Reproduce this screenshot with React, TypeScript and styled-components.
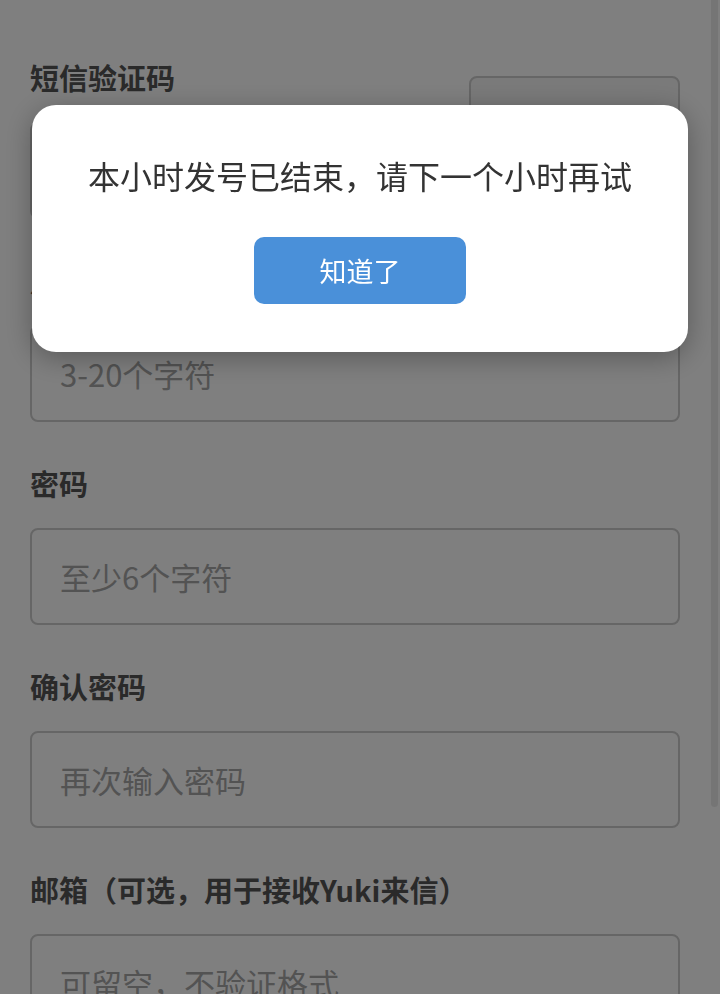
import styled, { createGlobalStyle } from "styled-components"

const GlobalStyle = createGlobalStyle`
html, body {
  margin: 0;
  padding: 0;
  overflow: hidden;
}
body {
  font-family: "Noto Sans CJK SC", "Noto Sans", sans-serif;
  background: #ffffff;
}
`

type FieldProps = {
  label: string
  placeholder: string
  type?: string
}

function Field({ label, placeholder, type = "text" }: FieldProps) {
  return (
    <FieldGroup>
      <Label>{label}</Label>
      <Input type={type} placeholder={placeholder} />
    </FieldGroup>
  )
}

export default function App() {
  return (
    <>
      <GlobalStyle />
      <Page>
        <Form>
          {/* sms code row: input + send button */}
          <SmsRow>
            <SmsColumn>
              <Label>短信验证码</Label>
              <Input placeholder="6位验证码" />
            </SmsColumn>
            <SendButton type="button">获取验证码</SendButton>
          </SmsRow>

          <Field label="用户名" placeholder="3-20个字符" />
          <Field label="密码" placeholder="至少6个字符" type="password" />
          <Field label="确认密码" placeholder="再次输入密码" type="password" />
          <Field label="邮箱（可选，用于接收Yuki来信）" placeholder="可留空，不验证格式" />

          <SubmitButton type="button">注册</SubmitButton>
        </Form>
        <ScrollThumb />
      </Page>

      <Overlay>
        <Dialog>
          <Message>本小时发号已结束，请下一个小时再试</Message>
          <OkButton type="button">知道了</OkButton>
        </Dialog>
      </Overlay>
    </>
  )
}

const Page = styled.div`
position: relative;
height: 100vh;
overflow: hidden;
background: #ffffff;
`

const ScrollThumb = styled.div`
position: absolute;
top: -6px;
right: 2px;
width: 7px;
height: 813px;
border-radius: 4px;
background: #ebebeb;
`

const Form = styled.div`
padding: 57px 40px 58px 30px;
display: flex;
flex-direction: column;
`

const FieldGroup = styled.div`
display: flex;
flex-direction: column;
margin-bottom: 41px;
`

const Label = styled.label`
font-size: 29px;
font-weight: 700;
line-height: 40px;
color: #555555;
margin-bottom: 25px;
`

const Input = styled.input`
box-sizing: border-box;
height: 97px;
width: 100%;
border: 2px solid #cccccc;
border-radius: 8px;
padding: 0 28px;
font-family: inherit;
font-size: 31px;
color: #333333;
background: #ffffff;
outline: none;

&::placeholder {
  color: #a6a6a6;
}
`

const SmsRow = styled.div`
display: flex;
align-items: flex-end;
gap: 18px;
margin-bottom: 41px;
`

const SmsColumn = styled.div`
flex: 1;
display: flex;
flex-direction: column;
`

const SendButton = styled.button`
box-sizing: border-box;
width: 211px;
height: 143px;
border: 2px solid #cccccc;
border-radius: 8px;
background: #f4f4f4;
font-family: inherit;
font-size: 28px;
color: #666666;
`

const SubmitButton = styled.button`
height: 97px;
border: none;
border-radius: 10px;
background: #4a90d9;
color: #ffffff;
font-family: inherit;
font-size: 32px;
`

const Overlay = styled.div`
position: fixed;
inset: 0;
background: rgba(0, 0, 0, 0.5);
display: flex;
justify-content: center;
align-items: flex-start;
padding-top: 105px;
`

const Dialog = styled.div`
width: 656px;
box-sizing: border-box;
background: #ffffff;
border-radius: 24px;
padding: 46px 24px 48px;
display: flex;
flex-direction: column;
align-items: center;
box-shadow: 0 6px 28px rgba(0, 0, 0, 0.3);
`

const Message = styled.p`
margin: 0 0 38px;
font-size: 32px;
line-height: 48px;
color: #333333;
text-align: center;
`

const OkButton = styled.button`
width: 212px;
height: 67px;
border: none;
border-radius: 10px;
background: #4a90d9;
color: #ffffff;
font-family: inherit;
font-size: 27px;
`
